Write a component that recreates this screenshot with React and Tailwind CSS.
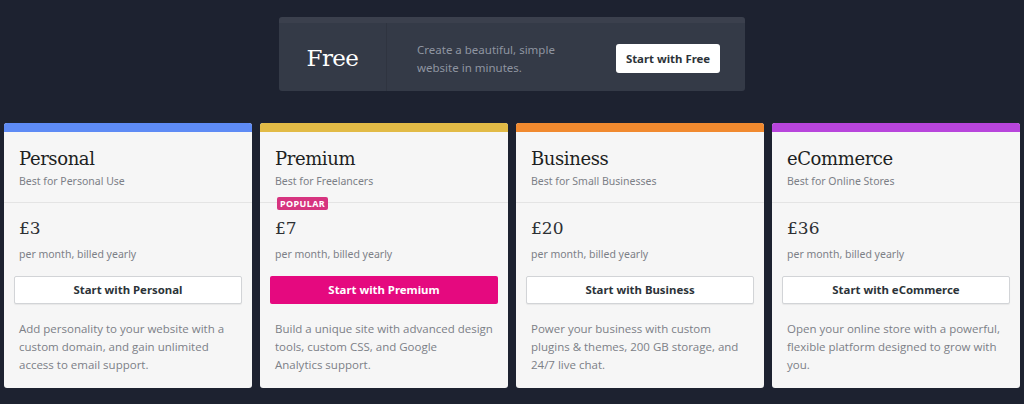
const plans = [
  {
    name: 'Personal',
    tagline: 'Best for Personal Use',
    price: '£3',
    bar: 'bg-[#5e8bf5]',
    cta: 'Start with Personal',
    blurb: 'Add personality to your website with a custom domain, and gain unlimited access to email support.',
  },
  {
    name: 'Premium',
    tagline: 'Best for Freelancers',
    price: '£7',
    bar: 'bg-[#e2bb46]',
    cta: 'Start with Premium',
    blurb: (
      <>
        Build a unique site with advanced design tools, custom CSS, and Google <br />
        Analytics support.
      </>
    ),
    popular: true,
  },
  {
    name: 'Business',
    tagline: 'Best for Small Businesses',
    price: '£20',
    bar: 'bg-[#f18a2f]',
    cta: 'Start with Business',
    blurb: 'Power your business with custom plugins & themes, 200 GB storage, and 24/7 live chat.',
  },
  {
    name: 'eCommerce',
    tagline: 'Best for Online Stores',
    price: '£36',
    bar: 'bg-[#b845dc]',
    cta: 'Start with eCommerce',
    blurb: 'Open your online store with a powerful, flexible platform designed to grow with you.',
  },
];

const PlanCard = ({ plan }) => (
  <div className="flex flex-col overflow-hidden rounded-[3px] bg-[#f6f6f6]">
    <div className={`h-[9px] ${plan.bar}`} />

    {/* Header */}
    <div className="relative border-b border-[#e4e4e4] px-[15px] pt-[14px] pb-[13px]">
      <h3 className="text-[18px] leading-[26px] text-[#1d1f22] [font-family:'DejaVu_Serif',serif] tracking-[-0.4px]">
        {plan.name}
      </h3>
      <p className="mt-[1px] text-[10.5px] leading-[16px] text-[#7c8087]">{plan.tagline}</p>
      {plan.popular && (
        <span className="absolute left-[17px] -bottom-[8px] rounded-[2px] bg-[#d6347f] px-[3px] text-[9px] leading-[13px] font-bold tracking-[0.4px] text-white">
          POPULAR
        </span>
      )}
    </div>

    {/* Price */}
    <div className="px-[15px] pt-[13px]">
      <div className="text-[17px] leading-[24px] text-[#2c2f33] [font-family:'DejaVu_Serif',serif]">
        {plan.price}
      </div>
      <p className="mt-[6px] text-[10.5px] leading-[16px] text-[#7c8087]">per month, billed yearly</p>
    </div>

    <div className="px-[10px] pt-[14px]">
      {plan.popular ? (
        <button className="h-[28px] w-full rounded-[2px] bg-[#e5097f] text-[11.4px] font-bold text-white">
          {plan.cta}
        </button>
      ) : (
        <button className="h-[28px] w-full rounded-[2px] border border-[#d2d4d7] bg-white text-[11.4px] font-bold text-[#2c3338] shadow-[0_1px_1px_rgba(0,0,0,0.06)]">
          {plan.cta}
        </button>
      )}
    </div>

    <p className="px-[15px] pt-[16px] pb-[14px] text-[11.5px] leading-[18px] text-[#7c8087] [font-family:'Open_Sans',sans-serif]">
      {plan.blurb}
    </p>
  </div>
);

export default function App() {
  return (
    <div
      className="min-h-[404px] w-full bg-[#1d2230] px-[4px] pt-[17px]"
      style={{ fontFamily: '"Noto Sans", "Open Sans", sans-serif' }}
    >
      {/* Free plan banner */}
      <div className="mx-auto flex h-[74px] w-[466px] items-stretch overflow-hidden rounded-[3px] border-t-[6px] border-[#3b404d] bg-[#343a47]">
        <div className="flex w-[108px] items-center justify-center border-r border-[#2f3440] pt-[2px]">
          <span className="text-[23px] text-white [font-family:'DejaVu_Serif',serif] tracking-[-0.6px]">Free</span>
        </div>
        <div className="flex flex-1 items-center justify-between pt-[3px] pl-[30px] pr-[25px]">
          <p className="w-[170px] text-[11.5px] leading-[18px] text-[#8f95a1]">
            Create a beautiful, simple website in minutes.
          </p>
          <button className="h-[29px] w-[104px] rounded-[3px] bg-white text-[11.4px] font-bold text-[#2c3338]">
            Start with Free
          </button>
        </div>
      </div>

      {/* Paid plans */}
      <div className="mt-[32px] grid grid-cols-4 gap-[8px]">
        {plans.map((plan) => (
          <PlanCard key={plan.name} plan={plan} />
        ))}
      </div>
    </div>
  );
}
